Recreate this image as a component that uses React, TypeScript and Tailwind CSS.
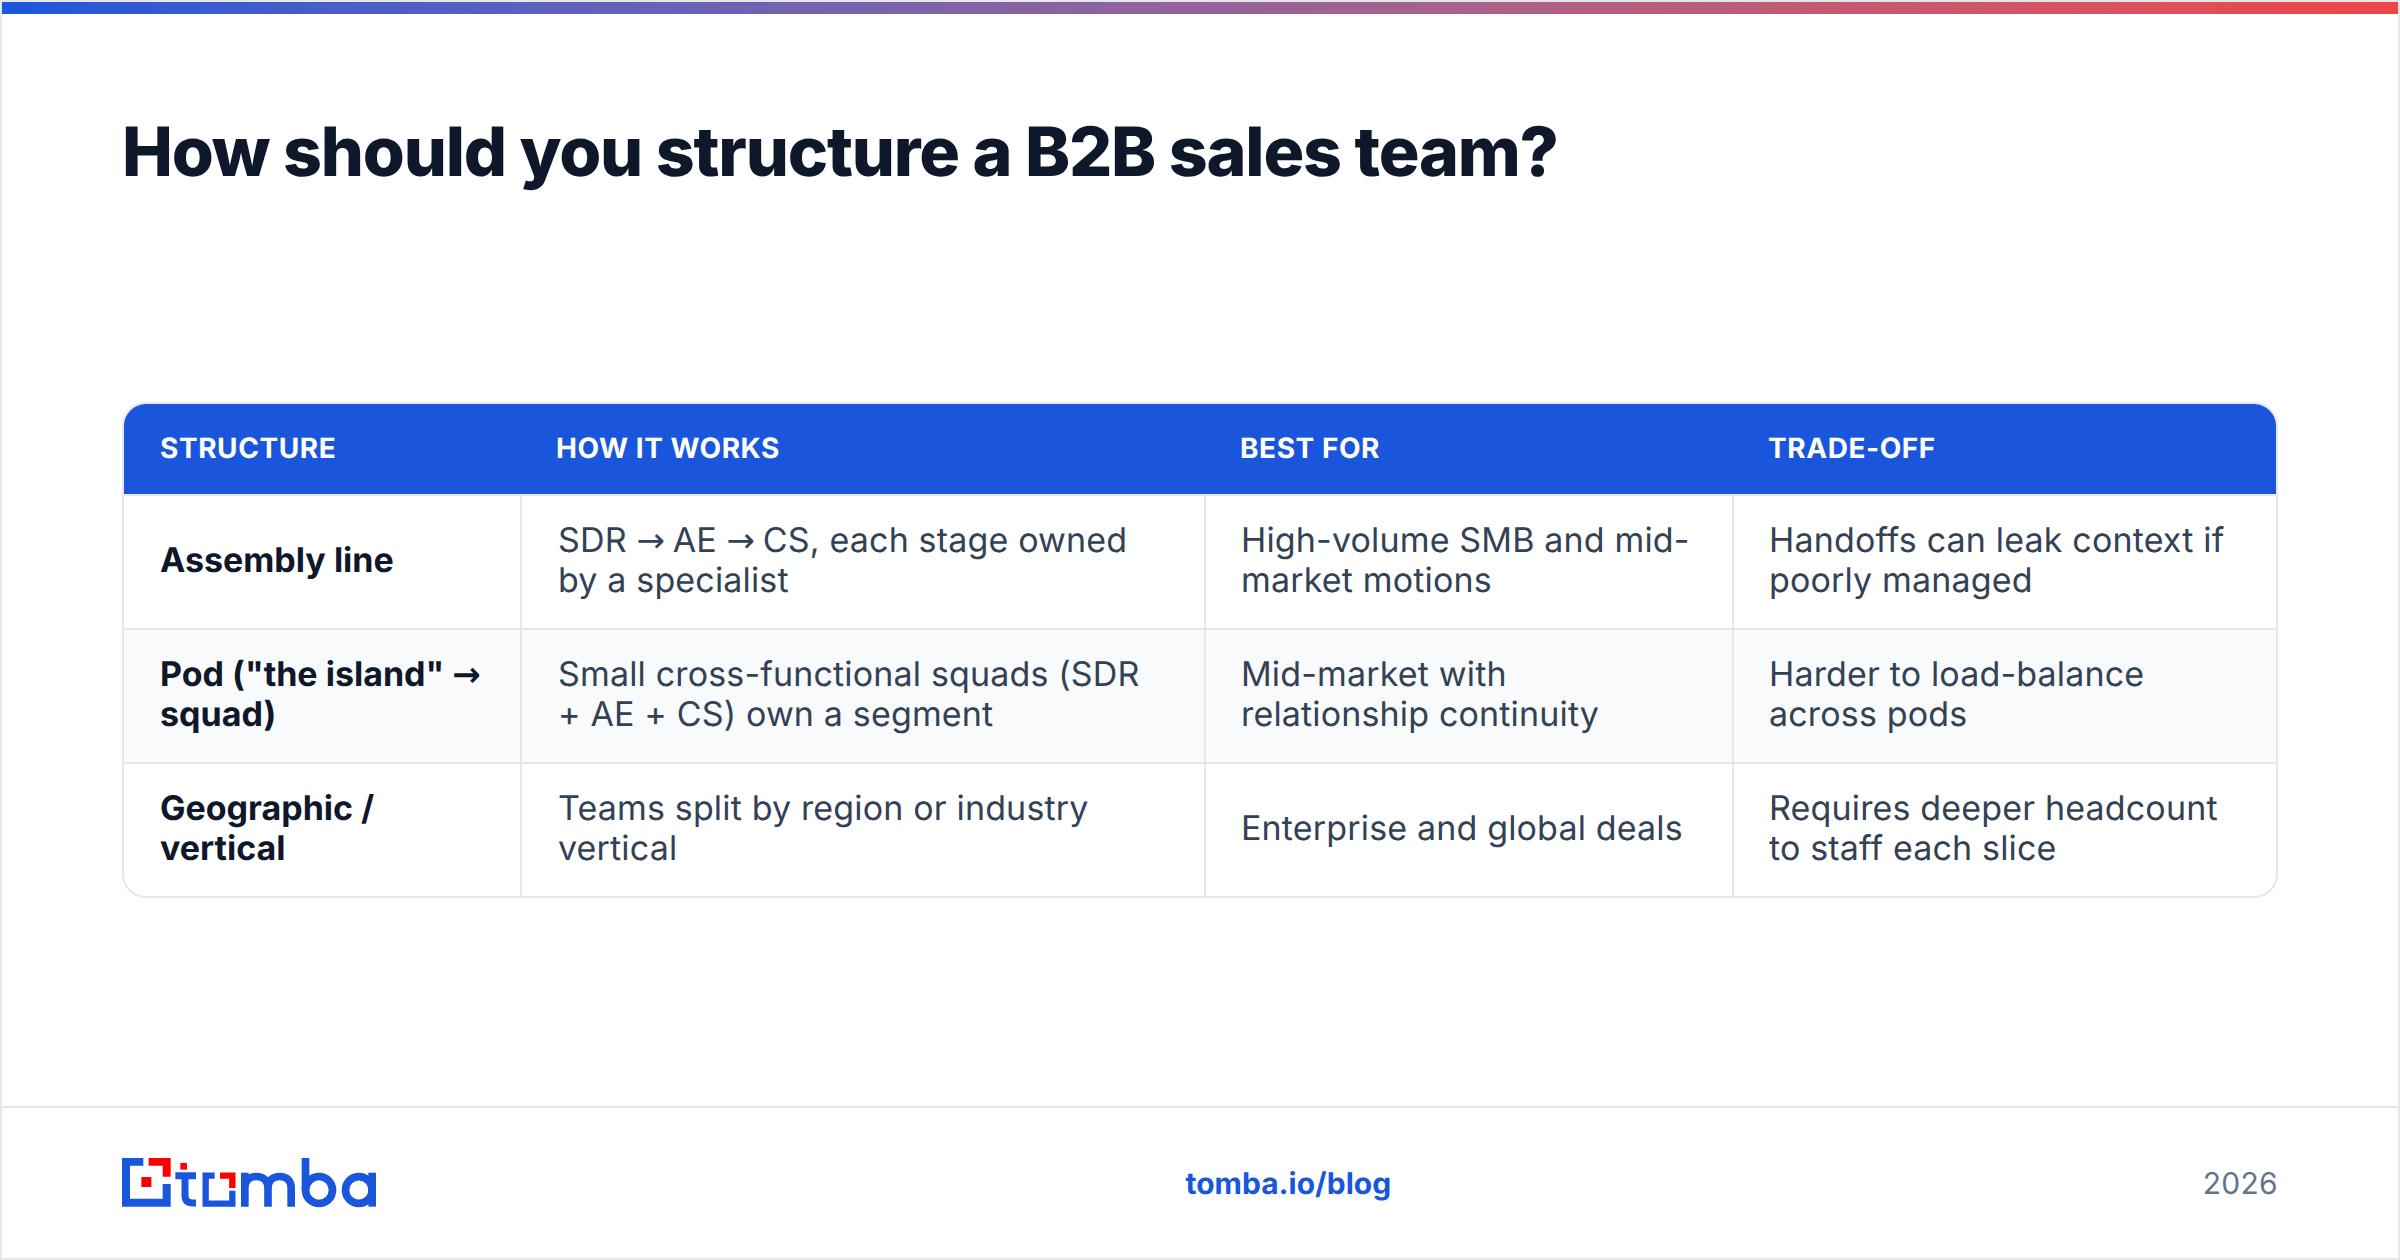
const rows = [
  {
    name: ['Assembly line'],
    how: ["SDR → AE → CS, each stage owned", "by a specialist"],
    best: ["High-volume SMB and mid-", "market motions"],
    trade: ["Handoffs can leak context if", "poorly managed"],
  },
  {
    name: ['Pod ("the island" →', "squad)"],
    how: ["Small cross-functional squads (SDR", "+ AE + CS) own a segment"],
    best: ["Mid-market with", "relationship continuity"],
    trade: ["Harder to load-balance", "across pods"],
  },
  {
    name: ["Geographic /", "vertical"],
    how: ["Teams split by region or industry", "vertical"],
    best: ["Enterprise and global deals"],
    trade: ["Requires deeper headcount", "to staff each slice"],
  },
];

const Logo = () => (
  <svg viewBox="126 114 762 150" width="254" height="50" role="img" aria-label="tomba">
    <path d="M126 114H190V137H150V236H248V192H272V260H126Z" fill="#1a56db" />
    <path d="M206 114H272V170H248V137H206Z" fill="#ff0000" />
    <rect x="184" y="171" width="30" height="30" fill="#ff0000" />
    <rect x="301" y="129" width="20" height="20" fill="#ff0000" />
    <path d="M286 167H348M315 167V226Q315 249 338 249H348" fill="none" stroke="#1a56db" strokeWidth="21" />
    <path d="M404 167H377V251H457V212" fill="none" stroke="#1a56db" strokeWidth="19" />
    <path d="M420 167H457V204" fill="none" stroke="#ff0000" strokeWidth="19" />
    <path
      d="M494.5 260V158M494.5 205C494.5 182 508 169.5 529 169.5C550 169.5 564 182 564 205V260M564 205C564 182 578 169.5 599 169.5C620 169.5 633.5 182 633.5 205V260"
      fill="none"
      stroke="#1a56db"
      strokeWidth="23"
    />
    <path d="M676.5 114V210" fill="none" stroke="#1a56db" strokeWidth="23" />
    <circle cx="717" cy="210" r="40.5" fill="none" stroke="#1a56db" strokeWidth="23" />
    <circle cx="836.5" cy="210" r="40" fill="none" stroke="#1a56db" strokeWidth="23" />
    <path d="M876.5 158V260" fill="none" stroke="#1a56db" strokeWidth="23" />
  </svg>
);

// the arrow comes from DejaVu in the original, Inter's is wider
const Lines = ({ lines, arrow = "" }: { lines: string[]; arrow?: string }) => (
  <div className="pb-[3px]">
    {lines.map((line) => (
      <span key={line} className="block whitespace-nowrap">
        {line.split("→").map((part, i) => (
          <span key={i}>
            {i > 0 && <span className={`font-['DejaVu_Sans',sans-serif] ${arrow}`}>→</span>}
            {part}
          </span>
        ))}
      </span>
    ))}
  </div>
);

const grid = "grid grid-cols-[396px_684px_528px_1fr]";

export default function App() {
  return (
    <div className="w-[2400px] h-[1260px] flex flex-col bg-white border-2 border-[#e5e7eb] font-['Inter',sans-serif] [text-rendering:geometricPrecision] overflow-hidden">
      <div className="h-3 shrink-0 bg-gradient-to-r from-[#1a56db] to-[#ef4444]" />

      <div className="flex-1 flex flex-col px-[120px]">
        <h1 className="mt-[97px] text-[68px] leading-[82px] font-extrabold tracking-[-1.2px] text-[#0f172a]">
          How should you structure a B2B sales team?
        </h1>

        <div className="mt-[209px] rounded-[24px] border-2 border-[#e5e7eb] overflow-hidden">
          <div className={`${grid} h-[92px] pb-[2px] items-center bg-[#1a56db] border-b-2 border-[#e5e7eb] text-white text-[28px] font-bold tracking-[0.56px]`}>
            <div className="pl-[36px]">STRUCTURE</div>
            <div className="pl-[36px]">HOW IT WORKS</div>
            <div className="pl-[36px]">BEST FOR</div>
            <div className="pl-[36px]">TRADE-OFF</div>
          </div>
          {rows.map((row, i) => (
            <div
              key={i}
              className={`${grid} text-[34px] leading-[40px] text-[#334155] ${i < 2 ? "h-[134px] border-b-2 border-[#e5e7eb]" : "h-[132px]"} ${i === 1 ? "bg-[#f8fafc]" : ""}`}
            >
              <div className="flex items-center pl-[36px] font-bold text-[#0f172a]"><Lines lines={row.name} /></div>
              <div className="flex items-center pl-[36px] border-l-2 border-[#e5e7eb] tracking-[0.16px]"><Lines lines={row.how} arrow="tracking-[-2px]" /></div>
              <div className="flex items-center pl-[35px] border-l-2 border-[#e5e7eb] tracking-[0.16px]"><Lines lines={row.best} /></div>
              <div className="flex items-center pl-[35px] border-l-2 border-[#e5e7eb] tracking-[0.16px]"><Lines lines={row.trade} /></div>
            </div>
          ))}
        </div>
      </div>

      <div className="h-[152px] shrink-0 flex items-center justify-between px-[120px] border-t-2 border-[#e5e7eb] text-[30px]">
        <Logo />
        <span className="font-bold text-[#1a56db] pt-[2px] mr-[2px]">tomba.io/blog</span>
        <span className="text-[#64748b] pt-[2px] tracking-[0.3px]">2026</span>
      </div>
    </div>
  );
}
